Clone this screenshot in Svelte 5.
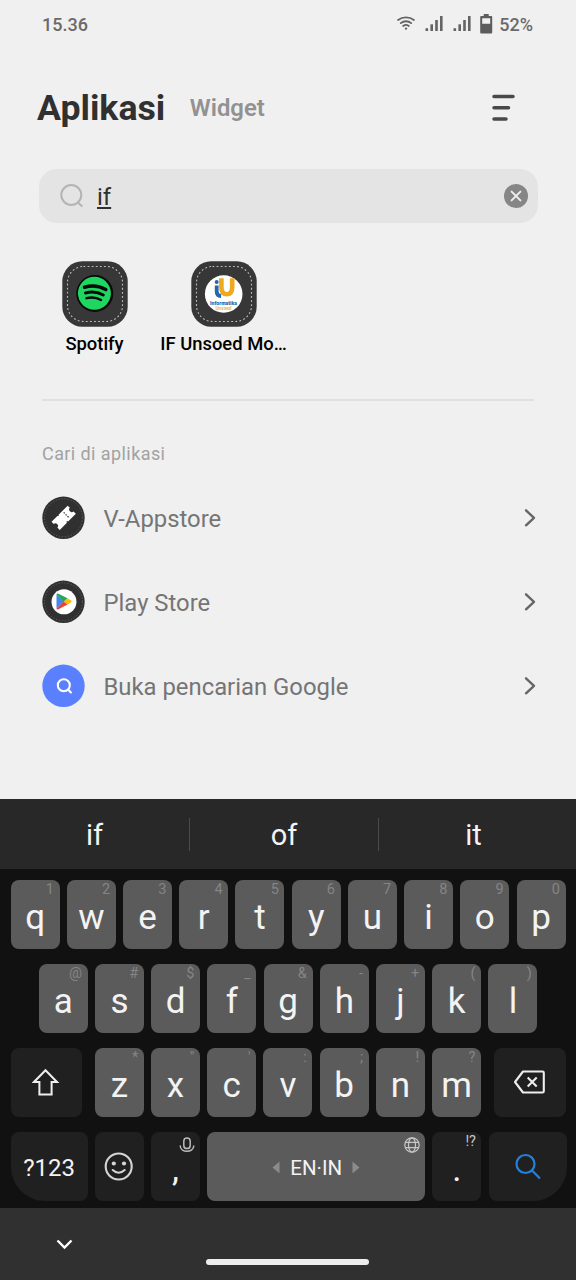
<script>
  const suggestions = ['if', 'of', 'it'];
  const top = [['q', '1'], ['w', '2'], ['e', '3'], ['r', '4'], ['t', '5'], ['y', '6'], ['u', '7'], ['i', '8'], ['o', '9'], ['p', '0']];
  const home = [['a', '@'], ['s', '#'], ['d', '$'], ['f', '_'], ['g', '&'], ['h', '-'], ['j', '+'], ['k', '('], ['l', ')']];
  const bottom = [['z', '*'], ['x', '"'], ['c', "'"], ['v', ':'], ['b', ';'], ['n', '!'], ['m', '?']];
  const links = [
    { id: 'vapp', label: 'V-Appstore' },
    { id: 'play', label: 'Play Store' },
    { id: 'google', label: 'Buka pencarian Google' }
  ];
</script>

{#snippet letter(k)}
  <div class="key"><span class="hint">{k[1]}</span><span class="glyph">{k[0]}</span></div>
{/snippet}

{#snippet signal()}
  <svg width="18" height="16" viewBox="0 0 18 16" fill="#646464">
    <rect x="0.5" y="12.2" width="2.6" height="2.8" /><rect x="5.4" y="8.3" width="2.6" height="6.7" /><rect x="10.2" y="4" width="2.6" height="11" /><rect x="15" y="0" width="2.6" height="15" />
  </svg>
{/snippet}

<div class="phone">
  <div class="status">
    <span class="clock">15.36</span>
    <div class="indicators">
      <svg class="wifi" width="18" height="16" viewBox="0 0 20 17" fill="none" stroke="#646464" stroke-width="2" stroke-linecap="round">
        <path d="M1.200 5.2C6.3 1.3 13.7 1.3 18.800 5.2M4.200 8.600C7.500 5.900 12.500 5.900 15.800 8.600M6.900 11.800C8.700 10.300 11.300 10.300 13.100 11.800" /><circle cx="10" cy="14.700" r="1.300" fill="#646464" stroke="none" />
      </svg>
      {@render signal()}
      {@render signal()}
      <svg class="battery" width="13" height="20" viewBox="0 0 13 20" fill="#5c5c5c">
        <path fill-rule="evenodd" d="M3.700 0h5v2h2.500q1 0 1 1v15.500q0 1-1 1h-10q-1 0-1-1v-15.500q0-1 1-1h2.500zM2.200 4.300v5.500h8v-5.500z" />
      </svg>
      <span>52%</span>
    </div>
  </div>

  <header>
    <h1>Aplikasi</h1>
    <h2>Widget</h2>
    <svg width="24" height="28" viewBox="0 0 24 28" stroke="#484848" stroke-width="3.500" stroke-linecap="round"><path d="M2 2.400H21M2 13.700H16.500M2 25H14" /></svg>
  </header>

  <div class="search">
    <svg width="24" height="24" viewBox="0 0 24 24" fill="none" stroke="#b4b4b4" stroke-width="2"><circle cx="11.300" cy="11" r="10" /><path d="M18.400 19l4 3.600" /></svg>
    <span class="query">if</span>
    <svg width="24" height="24" viewBox="0 0 24 24"><circle cx="12" cy="12" r="12" fill="#868686" /><path d="M7.600 7.600l8.800 8.800M16.400 7.600l-8.800 8.800" stroke="#efefef" stroke-width="2" stroke-linecap="round" /></svg>
  </div>

  <div class="apps">
    <div class="app">
      <svg width="66" height="66" viewBox="0 0 66 66">
        <rect x=".3" y=".3" width="65.400" height="65.400" rx="20" fill="#373737" />
        <rect x="5.500" y="5.500" width="55" height="55" rx="16" fill="none" stroke="#bdbdbd" stroke-width="1.100" stroke-dasharray="1.800 2.300" />
        <circle cx="32.800" cy="32.500" r="18.500" fill="#090909" /><circle cx="32.400" cy="32.300" r="16.500" fill="#1ed760" />
        <g fill="none" stroke="#090909" stroke-linecap="round"><path d="M22.500 26.200Q34 22.900 43.800 28.600" stroke-width="3.500" /><path d="M23.500 32Q33 29.300 41.300 34" stroke-width="2.900" /><path d="M24.500 37.200Q32.500 35.200 39 39" stroke-width="2.400" /></g>
      </svg>
      <span>Spotify</span>
    </div>
    <div class="app">
      <svg width="66" height="66" viewBox="0 0 66 66" font-family="Roboto, sans-serif">
        <rect x=".3" y=".3" width="65.400" height="65.400" rx="20" fill="#373737" />
        <rect x="5.500" y="5.500" width="55" height="55" rx="16" fill="none" stroke="#bdbdbd" stroke-width="1.100" stroke-dasharray="1.800 2.300" />
        <circle cx="32.700" cy="33" r="18.800" fill="#fff" />
        <path d="M30.400 17.300v8.900q0 7 5.400 7t5.400-7v-8.900" fill="none" stroke="#eea91f" stroke-width="4.600" />
        <circle cx="25.700" cy="20.900" r="2" fill="#2367ad" />
        <path d="M25.700 24.500v6.200q0 4 4.400 4.300" fill="none" stroke="#2367ad" stroke-width="3.800" />
        <text x="32.500" y="43.500" text-anchor="middle" font-size="5.500" font-weight="900" fill="#226bad" textLength="27" lengthAdjust="spacingAndGlyphs">Informatika</text>
        <text x="32.500" y="48.500" text-anchor="middle" font-size="4.600" font-weight="700" fill="#e9b650" textLength="16" lengthAdjust="spacingAndGlyphs">Unsoed</text>
      </svg>
      <span>IF Unsoed Mo…</span>
    </div>
  </div>

  <div class="rule"></div>
  <div class="caption">Cari di aplikasi</div>

  <div class="links">
    {#each links as link}
      <div class="link">
        <svg width="43" height="43" viewBox="0 0 43 43">
          {#if link.id === 'google'}
            <circle cx="21.500" cy="21.800" r="21.200" fill="#5a80ff" />
            <g fill="none" stroke="#fff" stroke-width="2.100" stroke-linecap="round"><circle cx="21.800" cy="21.200" r="6" /><path d="M26.300 25.800l2.600 2.700" /></g>
          {:else}
            <circle cx="21.500" cy="21.800" r="21.200" fill="#303030" />
            <circle cx="21.500" cy="21.800" r="19" fill="none" stroke="#707070" stroke-width=".7" stroke-dasharray="1.300 1.700" />
            {#if link.id === 'vapp'}
              <g transform="translate(21.700 21.800) rotate(-45) scale(.95 .85)">
                <path fill="#fff" d="M-12-6.800h8.300q1.200 0 1.500 1.100q.5 0 .7-1.100h13.500v3.600q-2.500 0-2.500 3t2.500 3v4h-11.500q-.2-1.400-.8-1.400t-1 1.400h-10.700v-4q2.500 0 2.500-3t-2.500-3z" />
                <path d="M4-4.500v9.500" stroke="#303030" stroke-width="1.300" stroke-dasharray="1.700 1.500" />
              </g>
            {:else}
              <circle cx="22" cy="21.800" r="12.500" fill="#fff" />
              <path fill="#4285f4" d="M14.500 14.500v14l7.500-7z" /><path fill="#2aa55a" d="M14.500 14.500q.4-1.400 2-.8l9 4.600-3.800 3.800z" />
              <path fill="#fbbc04" d="M25.500 18.300l3.400 2q1.400 1.100 0 2.200l-3.400 2-3.800-3z" /><path fill="#ea4335" d="M14.500 28.500q.4 1.400 2 .8l9-4.800-3.800-3z" />
            {/if}
          {/if}
        </svg>
        <span>{link.label}</span>
        <svg class="chevron" width="12" height="19" viewBox="0 0 12 19" fill="none" stroke="#666" stroke-width="2.400" stroke-linecap="round" stroke-linejoin="round"><path d="M2 2.300l8 7.500-8 7.500" /></svg>
      </div>
    {/each}
  </div>

  <div class="suggestions">
    {#each suggestions as word}<div>{word}</div>{/each}
  </div>

  <div class="keyboard">
    <div class="keys">{#each top as k}{@render letter(k)}{/each}</div>
    <div class="keys home">{#each home as k}{@render letter(k)}{/each}</div>
    <div class="keys">
      <div class="key dark shift">
        <svg width="28" height="28" viewBox="0 0 28 28" fill="none" stroke="#eee" stroke-width="2"><path d="M13.500 2.300L25 14H19.600V26.500H7.400V14H2Z" /></svg>
      </div>
      {#each bottom as k}{@render letter(k)}{/each}
      <div class="key dark erase">
        <svg width="32" height="24" viewBox="0 0 32 24" fill="none" stroke="#eee" stroke-width="2.100" stroke-linejoin="round"><path d="M9 1.500H28.500q1.300 0 1.300 1.300V21.200q0 1.300-1.300 1.300H9L1 12ZM13.700 7.500l9 9M22.700 7.500l-9 9" /></svg>
      </div>
    </div>
    <div class="keys">
      <div class="key dark symbols">?123</div>
      <div class="key dark">
        <svg width="30" height="30" viewBox="0 0 30 30" fill="none" stroke="#d5d5d5" stroke-width="2.100"><circle cx="14.700" cy="15.500" r="13" /><path d="M8.700 19q6 5.500 12 0" stroke-linecap="round" /><g fill="#d5d5d5" stroke="none"><circle cx="9.800" cy="12.500" r="2.100" /><circle cx="20" cy="12.500" r="2.100" /></g></svg>
      </div>
      <div class="key dark">
        <svg class="corner mic" width="16" height="16" viewBox="0 0 16 16" fill="none" stroke="#bababa" stroke-width="1.500"><rect x="4.800" y="1" width="6.400" height="10.600" rx="3.200" /><path d="M1.200 8.400c0 7.800 13.600 7.800 13.600 0" /></svg>
        <span class="glyph mark">,</span>
      </div>
      <div class="key space">
        <svg width="8" height="13" viewBox="0 0 8 13"><path d="M7.500.5v12L.5 6.500z" fill="#8b8b8b" /></svg>
        <span>EN·IN</span>
        <svg width="8" height="13" viewBox="0 0 8 13"><path d="M.5.5v12l7-6z" fill="#8b8b8b" /></svg>
        <svg class="corner globe" width="16" height="16" viewBox="0 0 16 16" fill="none" stroke="#c8c8c8" stroke-width="1.200"><circle cx="8" cy="8" r="7.200" /><ellipse cx="8" cy="8" rx="3.500" ry="7.200" /><path d="M1.500 5.400h13M1.500 10.600h13" /></svg>
      </div>
      <div class="key dark"><span class="hint bright">!?</span><span class="glyph mark">.</span></div>
      <div class="key dark go">
        <svg width="26" height="26" viewBox="0 0 26 26" fill="none" stroke="#2380dc" stroke-width="2.200"><circle cx="10.500" cy="11" r="9" /><path d="M16.800 17.300l8.200 8.200" /></svg>
      </div>
    </div>
  </div>

  <div class="nav">
    <svg width="17" height="11" viewBox="0 0 17 11" fill="none" stroke="#fff" stroke-width="2.400"><path d="M1.500 1.500l7 7 7-7" /></svg>
    <div class="pill"></div>
  </div>
</div>

<style>
  :global(body) { background: #f0f0f0; }
  .phone { width: 576px; height: 1280px; display: flex; flex-direction: column; overflow: hidden; background: #f0f0f0; font-family: Roboto, sans-serif; }
  .phone * { box-sizing: border-box; }
  svg { display: block; flex: none; }
  .status { height: 50px; padding: 0 43px 2px 42px; display: flex; align-items: center; justify-content: space-between; font-size: 18px; font-weight: 500; color: #6a6a6a; }
  .indicators { display: flex; align-items: center; gap: 10px; }
  .indicators span { margin-left: -4px; }
  .battery { margin-left: -1px; margin-top: 0; }
  .wifi { margin-top: -2px; }
  header { height: 119px; padding: 0 60px 4px 37px; display: flex; align-items: center; }
  h1 { margin: 0; font-size: 35.700px; font-weight: 700; color: #303030; }
  h2 { margin: 0 0 0 24.500px; font-size: 23.850px; font-weight: 600; color: #929292; }
  header svg { margin-left: auto; margin-top: 1px; }
  .search { height: 54px; margin: 0 38.500px; padding: 0 9.500px 0 21px; border-radius: 18px; background: #e4e4e4; display: flex; align-items: center; }
  .query { margin-left: 13.500px; margin-right: auto; padding-top: 1px; font-size: 24px; color: #303030; text-decoration: underline; text-decoration-thickness: 1.500px; text-underline-offset: 2px; }
  .apps { height: 176px; padding: 38px 0 0 30px; display: flex; }
  .app { width: 129px; display: flex; flex-direction: column; align-items: center; gap: 5px; font-size: 18.400px; line-height: 24px; font-weight: 500; color: #000; white-space: nowrap; }
  .rule { height: 2px; margin: 0 42px; background: #e0e0e0; }
  .caption { height: 74px; padding: 41px 42px 0; font-size: 18px; line-height: 24px; letter-spacing: .42px; color: #a2a2a2; }
  .link { height: 84px; padding: 0 40px 0 42px; display: flex; align-items: center; font-size: 23.850px; color: #757575; }
  .link span { margin-left: 18.500px; margin-top: 3px; }
  .chevron { margin-left: auto; }
  .suggestions { height: 70px; margin-top: 72px; padding: 1px 8px 0 0; background: #282828; display: grid; grid-template-columns: 189px 189px 1fr; align-items: center; font-size: 29px; text-align: center; color: #f3f3f3; flex: none; }
  .suggestions div { height: 33px; line-height: 35px; }
  .suggestions div + div { border-left: 1px solid #4a4a4a; }
  .keyboard { height: 339px; padding: 11px 10.400px 0 10.600px; background: #111; display: flex; flex-direction: column; gap: 15.200px; flex: none; }
  .keys { height: 68.800px; display: flex; gap: 7.220px; }
  .home { padding: 0 28.120px; }
  .key { position: relative; flex: 0 0 49px; height: 100%; border-radius: 8px; background: #5b5b5b; display: flex; align-items: center; justify-content: center; color: #f3f3f3; }
  .dark { background: #202020; }
  .glyph { font-size: 35px; line-height: 42px; margin-top: 7.200px; }
  .hint { position: absolute; right: 5.700px; top: 2px; font-size: 14.500px; line-height: 16px; color: #858585; }
  .bright { color: #c5c5c5; right: 5.500px; }
  .shift { flex-basis: 71.500px; margin-right: 5.500px; }
  .erase { flex-basis: 72px; margin-left: 5.500px; }
  .symbols { flex-basis: 77px; border-bottom-left-radius: 34px; font-size: 24px; padding-top: 4px; }
  .mark { margin-top: 7px; }
  .corner { position: absolute; right: 5px; top: 5.500px; }
  .space { flex: 0 0 218px; gap: 10px; font-size: 20.500px; padding-top: 3px; }
  .space span { white-space: nowrap; }
  .go { flex-basis: 78px; border-bottom-right-radius: 34px; }
  .nav { flex: 1; background: #303030; display: flex; flex-direction: column; padding-top: 31px; }
  .nav svg { margin-left: 56px; }
  .pill { width: 163px; height: 6px; margin: 9px 0 0 206px; border-radius: 3px; background: #ededed; }
</style>
